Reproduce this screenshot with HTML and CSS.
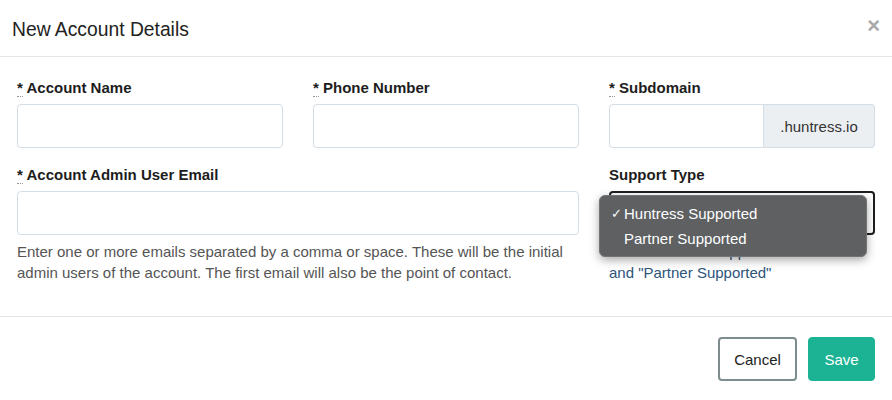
FILE: index.html
```html
<!DOCTYPE html>
<html>
<head>
<meta charset="utf-8">
<link rel="stylesheet" href="styles.css">
</head>
<body>
<div class="modal">
  <div class="modal-header">
    <h4 class="modal-title">New Account Details</h4>
    <span class="close">×</span>
  </div>
  <div class="modal-body">
    <div class="field">
      <label class="label"><abbr class="req">*</abbr> Account Name</label>
      <input class="input" type="text">
    </div>
    <div class="field">
      <label class="label"><abbr class="req">*</abbr> Phone Number</label>
      <input class="input" type="text">
    </div>
    <div class="field">
      <label class="label"><abbr class="req">*</abbr> Subdomain</label>
      <div class="input-group">
        <input class="input grouped" type="text">
        <span class="addon">.huntress.io</span>
      </div>
    </div>
    <div class="field span2">
      <label class="label"><abbr class="req">*</abbr> Account Admin User Email</label>
      <input class="input" type="text">
      <p class="help">Enter one or more emails separated by a comma or space. These will be the initial admin users of the account. The first email will also be the point of contact.</p>
    </div>
    <div class="field">
      <label class="label">Support Type</label>
      <div class="select-wrap">
        <div class="select"><span class="caret">▾</span></div>
        <div class="menu">
          <div class="item"><span class="check">✓</span>Huntress Supported</div>
          <div class="item">Partner Supported</div>
        </div>
      </div>
      <p class="help link">Pick "Huntress Supported"<br>and "Partner Supported"</p>
    </div>
  </div>
  <div class="modal-footer">
    <button class="btn btn-cancel">Cancel</button>
    <button class="btn btn-save">Save</button>
  </div>
</div>
</body>
</html>
```

FILE: styles.css
```css
html, body {
  margin: 0;
  padding: 0;
  background: #fff;
  font-family: "Liberation Sans", Arial, sans-serif;
  color: #222;
}

.modal {
  width: 892px;
  height: 400px;
  overflow: hidden;
}

.modal-header {
  height: 57px;
  box-sizing: border-box;
  padding: 0 12px 0 12px;
  display: flex;
  align-items: center;
  justify-content: space-between;
  border-bottom: 1px solid #e5e5e5;
}

.modal-title {
  margin: 0;
  font-size: 19.3px;
  font-weight: normal;
  color: #222;
  padding-top: 3px;
}

.close {
  font-size: 22px;
  font-weight: bold;
  color: #a9a9a9;
  line-height: 1;
  margin-right: 0;
  margin-top: -4px;
}

.modal-body {
  display: grid;
  grid-template-columns: repeat(3, 266px);
  column-gap: 30px;
  row-gap: 17px;
  padding: 21px 17px 33px 17px;
}

.field {
  display: flex;
  flex-direction: column;
  min-width: 0;
}

.span2 {
  grid-column: span 2;
}

.label {
  font-size: 15px;
  font-weight: bold;
  line-height: 20px;
  height: 20px;
  margin-bottom: 6px;
  color: #1d1d1d;
}

.req {
  text-decoration: none;
  border-bottom: 1px dotted #999;
}

.input {
  box-sizing: border-box;
  height: 44px;
  width: 100%;
  margin: 0;
  border: 1px solid #d3dde6;
  border-radius: 4px;
  background: #fff;
  font: inherit;
}

.input-group {
  display: flex;
  height: 44px;
}

.grouped {
  width: 155px;
  flex: none;
  border-radius: 4px 0 0 4px;
}

.addon {
  flex: 1;
  display: flex;
  align-items: center;
  justify-content: center;
  box-sizing: border-box;
  background: #eceff2;
  border: 1px solid #d3dde6;
  border-left: none;
  border-radius: 0 4px 4px 0;
  font-size: 15px;
  color: #333;
}

.help {
  margin: 6px 0 0 0;
  font-size: 15px;
  line-height: 21px;
  color: #555;
}

.help.link {
  color: #2d5479;
  white-space: nowrap;
}

.select-wrap {
  position: relative;
  height: 44px;
}

.select {
  box-sizing: border-box;
  height: 44px;
  border: 2px solid #1e1e1e;
  border-radius: 4px;
  display: flex;
  align-items: center;
  justify-content: flex-end;
  padding-right: 6px;
}

.caret {
  font-size: 10px;
  color: #333;
}

.menu {
  position: absolute;
  left: -10px;
  top: 4px;
  width: 268px;
  box-sizing: border-box;
  padding: 5px 0;
  background: #5e6062;
  border: 1px solid #727476;
  border-radius: 6px;
  box-shadow: 0 3px 10px rgba(0, 0, 0, 0.35);
  z-index: 5;
}

.item {
  height: 25px;
  line-height: 25px;
  padding-left: 24px;
  font-size: 15px;
  color: #fff;
  position: relative;
}

.check {
  position: absolute;
  left: 11px;
  font-family: "DejaVu Sans", sans-serif;
  font-size: 13px;
  font-weight: bold;
}

.modal-footer {
  border-top: 1px solid #e5e5e5;
  padding: 20px 17px;
  display: flex;
  justify-content: flex-end;
  gap: 11px;
}

.btn {
  height: 44px;
  box-sizing: border-box;
  border-radius: 4px;
  font-family: "Liberation Sans", Arial, sans-serif;
  font-size: 15px;
  cursor: pointer;
}

.btn-cancel {
  width: 79px;
  background: #fff;
  border: 2px solid #7f8c8d;
  color: #222;
}

.btn-save {
  width: 67px;
  background: #1bb394;
  border: 1px solid #1bb394;
  color: #fff;
}
```
